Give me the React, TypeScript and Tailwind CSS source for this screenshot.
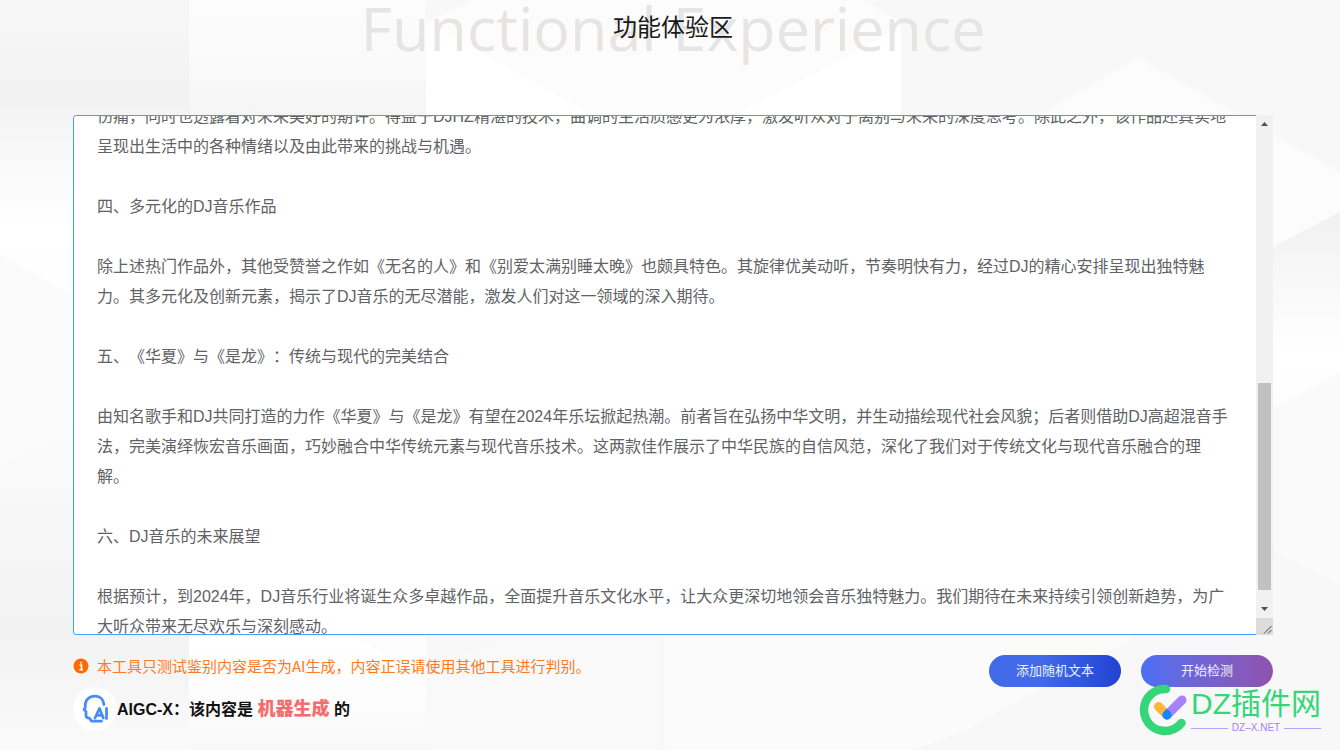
import { useEffect, useRef } from 'react';

const ARTICLE = `伤痛，同时也透露着对未来美好的期许。得益于DJHZ精湛的技术，曲调的生活质感更为浓厚，激发听众对于离别与未来的深度思考。除此之外，该作品还真实地呈现出生活中的各种情绪以及由此带来的挑战与机遇。

四、多元化的DJ音乐作品

除上述热门作品外，其他受赞誉之作如《无名的人》和《别爱太满别睡太晚》也颇具特色。其旋律优美动听，节奏明快有力，经过DJ的精心安排呈现出独特魅力。其多元化及创新元素，揭示了DJ音乐的无尽潜能，激发人们对这一领域的深入期待。

五、《华夏》与《是龙》：传统与现代的完美结合

由知名歌手和DJ共同打造的力作《华夏》与《是龙》有望在2024年乐坛掀起热潮。前者旨在弘扬中华文明，并生动描绘现代社会风貌；后者则借助DJ高超混音手法，完美演绎恢宏音乐画面，巧妙融合中华传统元素与现代音乐技术。这两款佳作展示了中华民族的自信风范，深化了我们对于传统文化与现代音乐融合的理解。

六、DJ音乐的未来展望

根据预计，到2024年，DJ音乐行业将诞生众多卓越作品，全面提升音乐文化水平，让大众更深切地领会音乐独特魅力。我们期待在未来持续引领创新趋势，为广大听众带来无尽欢乐与深刻感动。`;

function Backdrop() {
  return (
    <svg
      className="absolute inset-0 -z-10 h-full w-full"
      viewBox="0 0 1340 750"
      preserveAspectRatio="none"
      aria-hidden="true"
    >
      <defs>
        <linearGradient id="side" x1="0" y1="0" x2="0" y2="1">
          <stop offset="0" stopColor="#f7f7f7" />
          <stop offset="0.13" stopColor="#f2f2f2" />
          <stop offset="0.3" stopColor="#ffffff" />
          <stop offset="0.6" stopColor="#fafafa" />
          <stop offset="0.84" stopColor="#f2f2f2" />
          <stop offset="1" stopColor="#fafafa" />
        </linearGradient>
        <linearGradient id="column" x1="0" y1="0" x2="0" y2="1">
          <stop offset="0" stopColor="#fcfcfc" />
          <stop offset="0.5" stopColor="#fafafa" />
          <stop offset="1" stopColor="#f4f4f4" />
        </linearGradient>
        <linearGradient id="floor" x1="0" y1="0" x2="0" y2="1">
          <stop offset="0" stopColor="#ffffff" />
          <stop offset="0.5" stopColor="#fdfdfd" />
          <stop offset="1" stopColor="#f8f8f8" />
        </linearGradient>
        <linearGradient id="fold" x1="0" y1="0" x2="0" y2="1">
          <stop offset="0" stopColor="#f1f1f1" />
          <stop offset="0.7" stopColor="#ffffff" />
          <stop offset="1" stopColor="#fdfdfd" />
        </linearGradient>
      </defs>
      <rect width="1340" height="750" fill="#f8f8f8" />
      <rect width="189" height="750" fill="url(#side)" />
      <path d="M0 255 73 295V425L0 463Z" fill="#fbfbfb" />
      <rect x="189" width="237" height="120" fill="url(#column)" />
      <rect x="426" width="475" height="120" fill="#fcfcfc" />
      <path d="M426 0H475L426 22Z" fill="#f8f8f8" />
      <path d="M862 0H901V22Z" fill="#f8f8f8" />
      <path d="M426 22 592 115H426ZM901 28V115H735Z" fill="#ffffff" />
      <path d="M1138 58 1340 173V212L1240 264V115H1040Z" fill="#fcfcfc" />
      <path d="M1260 254 1340 212V373L1260 415Z" fill="url(#fold)" />
      <path d="M1260 415 1340 373V585L1260 545Z" fill="#fafafa" />
      <rect x="189" y="635" width="237" height="115" fill="url(#floor)" />
      <path d="M350 635H426V676Z" fill="#fcfcfc" />
      <path d="M506 635H664V750H426V676Z" fill="#f9f9f9" />
      <path d="M664 635H1138L960 733 910 750H664Z" fill="#fbfbfb" />
      <path d="M664 635V750M1138 635V750" stroke="#f5f5f5" />
    </svg>
  );
}

function Scrollbar() {
  return (
    <div className="flex w-[17px] shrink-0 flex-col bg-[#f1f1f1]" aria-hidden="true">
      <svg className="h-[17px] w-[17px]" viewBox="0 0 17 17">
        <path d="M5 11h7L8.500 7Z" fill="#505050" />
      </svg>
      <div className="flex-1" />
      <div className="mx-[2px] h-[207px] bg-[#c1c1c1]" />
      <div className="h-[11px]" />
      <svg className="h-[17px] w-[17px]" viewBox="0 0 17 17">
        <path d="M5 6h7L8.500 10Z" fill="#505050" />
      </svg>
      <svg className="h-[17px] w-[17px] bg-[#dcdcdc]" viewBox="0 0 17 17">
        <path d="M8 15.500 15.500 8M12 15.500 15.500 12" stroke="#444" fill="none" />
      </svg>
    </div>
  );
}

function AigcMark() {
  return (
    <svg className="h-11 w-11 shrink-0" viewBox="0 0 44 44" aria-hidden="true">
      <circle cx="22" cy="22" r="22" fill="#fff" />
      <g fill="none" stroke="#4a8cf7" strokeWidth="2.800" strokeLinecap="round" strokeLinejoin="round">
        <path d="M31 17.500C30.500 12 26.500 9.200 22 9.200 16 9.200 12.300 13 12.300 18v2.500L11 22.500 13 24.500v4c0 1.500 1 2.500 3.500 2.700L18.500 34.200H28.500" />
        <path d="M33.500 21.500V31.500" />
        <path d="M22 31 26.500 21.500 30.300 31M24.500 28.300H29" />
      </g>
    </svg>
  );
}

function Watermark() {
  return (
    <div className="pointer-events-none absolute right-[19px] bottom-[14px] flex items-center gap-1">
      <svg className="h-[52px] w-12" viewBox="0 0 48 52" aria-hidden="true">
        <g fill="none" strokeLinecap="round">
          <path d="M27 5A21 21 0 1 0 42.500 39" stroke="#34d677" strokeWidth="8.500" />
          <path d="M19.500 22.500 28 31" stroke="#ffb63d" strokeWidth="9" />
          <path d="M28 31 43 16" stroke="#a581fb" strokeWidth="9" />
        </g>
        <path d="M28 24.800 31.800 28.500A4.500 4.500 0 1 1 24.200 28.500Z" fill="#1585ff" />
      </svg>
      <div>
        <div className="text-[30px] leading-9 text-[#34d677]">DZ插件网</div>
        <div className="flex items-center gap-1 text-[10px] leading-3 text-[#a581fb]">
          <span className="h-px flex-1 bg-[#b9a0fb]" />
          DZ–X.NET
          <span className="h-px flex-1 bg-[#b9a0fb]" />
        </div>
      </div>
    </div>
  );
}

export default function App() {
  const editor = useRef<HTMLTextAreaElement>(null);

  useEffect(() => {
    if (editor.current) editor.current.scrollTop = 14;
  }, []);

  return (
    <div className="relative isolate min-h-screen overflow-hidden pr-[67px] pl-[73px] font-['Liberation_Sans','Noto_Sans_CJK_SC',sans-serif]">
      <Backdrop />
      <header className="grid h-[115px] justify-items-center">
        <p
          className="col-start-1 row-start-1 font-['Open_Sans',sans-serif] text-[61px] leading-[56px] text-[#e7e5e4]"
          aria-hidden="true"
        >
          Functional Experience
        </p>
        <h1 className="col-start-1 row-start-1 text-2xl leading-[56px] text-[#1a1a1a]">功能体验区</h1>
      </header>

      <main>
        <div className="flex h-[520px]">
          <textarea
            ref={editor}
            aria-label="检测文本"
            defaultValue={ARTICLE}
            spellCheck={false}
            className="min-w-0 flex-1 resize-none rounded-l border border-r-0 border-[#409eff] bg-white pr-[25px] pl-[23px] text-base leading-[30px] text-[#606266] outline-none [scrollbar-width:none] [text-spacing-trim:space-all]"
          />
          <Scrollbar />
        </div>

        <div className="flex items-start justify-between pt-5">
          <div>
            <p className="flex h-[22px] items-center gap-2 font-['Noto_Sans_CJK_SC',sans-serif] text-[15px] text-[#ff7a1f]">
              <svg className="h-4 w-4" viewBox="0 0 16 16" aria-hidden="true">
                <circle cx="8" cy="8" r="7.500" fill="#ff6a00" />
                <path d="M6.500 7H8.500V11.500M6.300 11.700H10M8 4V5.500" stroke="#fff" strokeWidth="1.600" fill="none" />
              </svg>
              本工具只测试鉴别内容是否为AI生成，内容正误请使用其他工具进行判别。
            </p>
            <p className="mt-[10px] flex items-center font-bold text-[#111]">
              <AigcMark />
              <span>
                AIGC-X：该内容是 <strong className="text-lg leading-6 text-[#f56c6c]">机器生成</strong> 的
              </span>
            </p>
          </div>
          <div className="flex gap-5 text-[13px] text-white/90">
            <button type="button" className="h-8 w-[132px] rounded-full bg-linear-to-r from-[#4169e8] from-40% to-[#2143d1]">
              添加随机文本
            </button>
            <button type="button" className="h-8 w-[132px] rounded-full bg-linear-to-r from-[#4a6ff3] to-[#8f52ad]">
              开始检测
            </button>
          </div>
        </div>
      </main>
      <Watermark />
    </div>
  );
}
